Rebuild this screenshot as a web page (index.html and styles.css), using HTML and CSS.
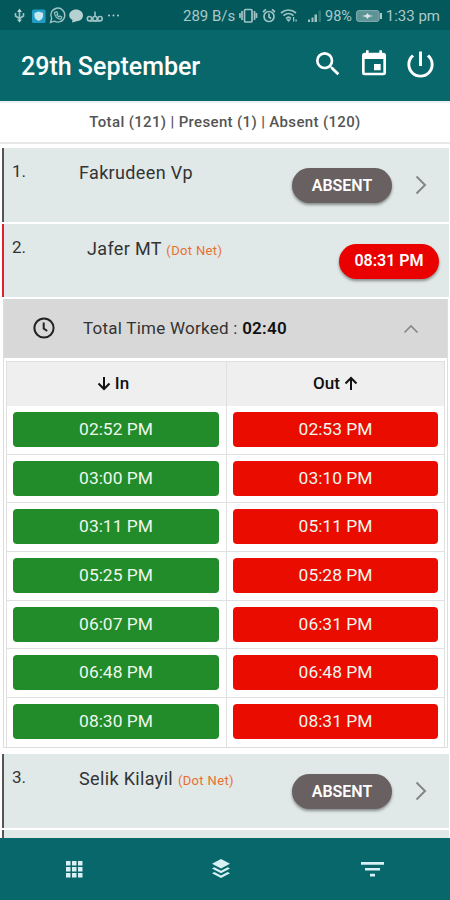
FILE: index.html
```
<!DOCTYPE html>
<html lang="en">
  <head>
    <meta charset="utf-8">
    <title>29th September</title>
    <link rel="stylesheet" href="styles.css">
  </head>
<body>
<div class="app">

  <div class="statusbar">
    <svg class="status-left" width="112" height="30" viewBox="0 0 112 30">
      <g fill="none" stroke="#9fc3c5" stroke-width="1.600">
        <path d="M9.500 21V10M5.500 13v3l4 2.500 4-2.500v-3"/>
        <path d="M40.500 22.500l1.200-4a7 7 0 1 1 2.700 2.700z" stroke-width="1.400"/>
        <path d="M44.500 12.500c0 4 3 6.700 6.300 6.700l1-2.200-2-1-1 1-2-2 1-1-1-2.300z" stroke-width="1.200"/>
        <path d="M79.500 21h10M85 11.500v5" />
        <circle cx="79.500" cy="18.700" r="2.200"/>
        <circle cx="85" cy="18.700" r="2.200"/>
        <circle cx="90" cy="18.700" r="2.200"/>
      </g>
      <g fill="#b6d1d2">
        <path d="M7 12l2.500-3.500L12 12zM7 19.500h5l-2.500 3z"/>
        <path d="M66 9.500c4 0 7 2.500 7 6s-3 5.700-6.500 5.700L62 22.500l.5-2.500c-2-1-3.300-2.600-3.300-4.700 0-3.300 3-5.800 6.800-5.800z"/>
        <circle cx="99" cy="15.500" r="1"/><circle cx="103.500" cy="15.500" r="1"/><circle cx="108" cy="15.500" r="1"/>
      </g>
      <rect x="22" y="9.500" width="13.500" height="13.500" rx="1.500" fill="#219dc5"/>
      <path d="M28.700 11.500l4.300 1.500v3c0 2.300-1.700 4-4.300 5-2.600-1-4.300-2.700-4.300-5v-3z" fill="#c5e8f1"/>
    </svg>
    <span class="speed">289 B/s</span>
    <svg class="status-mid" width="86" height="30" viewBox="238 0 86 30">
      <g fill="none" stroke="#9fc3c5" stroke-width="1.700">
        <rect x="244.500" y="9.500" width="7.500" height="12.500" rx="1"/>
        <path d="M242 11v9M240 13v5M254.500 11v9M256.500 13v5"/>
        <circle cx="269" cy="16.500" r="5"/>
        <path d="M269 13.500v3.500l2 1.500M263 12l3-2.700M275 12l-3-2.700"/>
        <path d="M281 13c4.500-4 10.500-4 15 0M283.500 15.700c3-2.700 7-2.700 10 0M286 18.500c1.500-1.500 3.500-1.500 5 0"/>
      </g>
      <g fill="#9fc3c5">
        <path d="M286 19.300h5l-2.500 2.700zM293 17h1.300v4.500H293zM295.500 19.500h1.300v2h-1.300z"/>
        <path d="M308 19.500h2V22h-2zM311.500 17.500h2V22h-2zM314.500 14.500h2.500V22h-2.500z"/>
      </g>
      <path d="M318.500 10.500h2.500V22h-2.500z" fill="#2d7679"/>
    </svg>
    <span class="percent">98%</span>
    <svg class="battery" width="26" height="12" viewBox="0 0 26 12">
      <rect x=".6" y=".6" width="22.500" height="10.800" rx="2" fill="#5e9395" stroke="#83afb1"/>
      <path d="M24 3h2v6h-2z" fill="#a9c9ca"/>
      <path d="M6 6l4-1 1.500-2 1.500 2 4 1-4 1-1.500 2L10 7z" fill="#d5e8e8"/>
    </svg>
    <span class="clock">1:33 pm</span>
  </div>

  <div class="header">
    <h1>29th September</h1>
    <svg class="icon-search" width="32" height="32" viewBox="0 0 24 24">
      <path fill="#fff" d="M15.500 14h-.79l-.28-.27A6.470 6.470 0 0 0 16 9.500 6.500 6.500 0 1 0 9.500 16c1.610 0 3.090-.59 4.230-1.570l.27.28v.79l5 4.990L20.490 19zm-6 0a4.500 4.500 0 1 1 0-9 4.500 4.500 0 0 1 0 9z"/>
    </svg>
    <svg class="icon-event" width="32" height="30" viewBox="0 0 24 24" preserveAspectRatio="none">
      <path fill="#fff" d="M17 12h-5v5h5zM16 1v2H8V1H6v2H5c-1.110 0-2 .9-2 2v14a2 2 0 0 0 2 2h14a2 2 0 0 0 2-2V5a2 2 0 0 0-2-2h-1V1zm3 18H5V8h14z"/>
    </svg>
    <svg class="icon-power" width="35" height="35" viewBox="0 0 24 24">
      <path fill="#fff" d="M13 3h-2v10h2zm4.830 2.170-1.420 1.420A6.920 6.920 0 0 1 19 12a7 7 0 1 1-11.420-5.420L6.170 5.170A8.930 8.930 0 0 0 3 12a9 9 0 0 0 18 0c0-2.740-1.230-5.180-3.170-6.830z"/>
    </svg>
  </div>

  <div class="summary">Total (121) | Present (1) | Absent (120)</div>

  <div class="list">
    <div class="person">
      <span class="no">1.</span>
      <span class="name">Fakrudeen Vp</span>
      <span class="pill">ABSENT</span>
      <svg class="chevron" width="12" height="20" viewBox="0 0 12 20"><path d="M1.500 1.500L10 10l-8.500 8.500"/></svg>
    </div>

    <div class="person present">
      <span class="no">2.</span>
      <span class="name">Jafer MT <small>(Dot Net)</small></span>
      <span class="pill pill-red">08:31 PM</span>
    </div>

    <div class="details">
      <div class="total">
        <svg class="icon-clock" width="22" height="22" viewBox="0 0 22 22"><circle cx="11" cy="11" r="9.600"/><path d="M10.700 5.500v6l3.500 2.500"/></svg>
        <span class="worked">Total Time Worked : <b>02:40</b></span>
        <svg class="collapse" width="16" height="10" viewBox="0 0 16 10"><path d="M1.500 8.500L8 2l6.500 6.500"/></svg>
      </div>
      <div class="times">
        <div class="head"><svg width="14" height="15" viewBox="0 0 14 15"><path d="M7 1v12M1.500 7.500L7 13l5.500-5.500"/></svg>In</div>
        <div class="head">Out<svg width="14" height="15" viewBox="0 0 14 15"><path d="M7 14V2M1.500 7.500L7 2l5.500 5.500"/></svg></div>
        <div class="cell"><span class="in">02:52 PM</span></div>
        <div class="cell"><span class="out">02:53 PM</span></div>
        <div class="cell"><span class="in">03:00 PM</span></div>
        <div class="cell"><span class="out">03:10 PM</span></div>
        <div class="cell"><span class="in">03:11 PM</span></div>
        <div class="cell"><span class="out">05:11 PM</span></div>
        <div class="cell"><span class="in">05:25 PM</span></div>
        <div class="cell"><span class="out">05:28 PM</span></div>
        <div class="cell"><span class="in">06:07 PM</span></div>
        <div class="cell"><span class="out">06:31 PM</span></div>
        <div class="cell"><span class="in">06:48 PM</span></div>
        <div class="cell"><span class="out">06:48 PM</span></div>
        <div class="cell"><span class="in">08:30 PM</span></div>
        <div class="cell"><span class="out">08:31 PM</span></div>
      </div>
    </div>

    <div class="person">
      <span class="no">3.</span>
      <span class="name">Selik Kilayil <small>(Dot Net)</small></span>
      <span class="pill">ABSENT</span>
      <svg class="chevron" width="12" height="20" viewBox="0 0 12 20"><path d="M1.500 1.500L10 10l-8.500 8.500"/></svg>
    </div>
    <div class="person"></div>
  </div>

  <div class="tabs">
    <div class="tab">
      <svg width="18" height="18" viewBox="0 0 18 18" fill="#d9f1f4">
        <path d="M1 1h4.500v4.500H1zM7 1h4.500v4.500H7zM13 1h4.500v4.500H13zM1 7h4.500v4.500H1zM7 7h4.500v4.500H7zM13 7h4.500v4.500H13zM1 13h4.500v4.500H1zM7 13h4.500v4.500H7zM13 13h4.500v4.500H13z"/>
      </svg>
    </div>
    <div class="tab">
      <svg width="20" height="22" viewBox="0 0 20 22" fill="#d9f1f4">
        <path d="M10 1l9 4.700-9 4.700-9-4.700z"/>
        <path d="M1 10.500l2.300-1.200L10 12.800l6.700-3.500 2.300 1.200-9 4.700z"/>
        <path d="M1 15.300l2.300-1.200 6.700 3.500 6.700-3.500 2.300 1.200-9 4.700z"/>
      </svg>
    </div>
    <div class="tab">
      <svg width="23" height="16" viewBox="0 0 23 16" fill="#d9f1f4">
        <path d="M0 1h23v2.700H0zM4 7h15v2.600H4zM9 12.800h5v2.600H9z"/>
      </svg>
    </div>
  </div>

</div>
</body>
</html>
```
FILE: styles.css
```
* {
  box-sizing: border-box;
}

body {
  margin: 0;
  font-family: Roboto, "Liberation Sans", sans-serif;
  color: #333;
  background: #fff;
}

svg {
  display: block;
  flex: none;
}

.app {
  display: flex;
  flex-direction: column;
  width: 450px;
  height: 900px;
  overflow: hidden;
}

/* phone status bar */
.statusbar {
  display: flex;
  align-items: center;
  flex: none;
  height: 30px;
  padding: 2px 10px 0 10px;
  background: #03585b;
  color: #a9c9ca;
  font-size: 15px;
  white-space: nowrap;
}

.statusbar svg {
  margin-top: -2px;
}

.speed {
  width: 53px;
  margin-left: 61px;
}

.status-mid {
  margin-left: 2px;
}

.percent {
  width: 29px;
  margin-left: 1px;
  font-size: 14.5px;
}

.statusbar .battery {
  margin: 0 0 0 2px;
}

.clock {
  margin-left: auto;
}

.header {
  display: flex;
  align-items: center;
  flex: none;
  height: 71px;
  padding: 0 12px 3px 21px;
  background: #07676b;
}

.header h1 {
  flex: 1;
  margin: 0;
  padding-top: 4px;
  color: #fff;
  font-size: 25px;
  font-weight: 500;
}

.icon-search {
  margin-right: 14px;
}

.icon-event {
  margin-right: 13px;
}

.summary {
  flex: none;
  height: 43px;
  border-bottom: 2px solid #e6e7e7;
  border-top: 2px solid #eceeef;
  color: #555;
  font-size: 15px;
  font-weight: 500;
  letter-spacing: .35px;
  line-height: 38px;
  text-align: center;
}

.list {
  flex: 1;
  padding: 4px 1px 0 2px;
  overflow: hidden;
}

.person {
  display: flex;
  align-items: flex-start;
  height: 74px;
  margin-bottom: 2px;
  padding: 0 22px 0 8px;
  background: #e0e8e8;
  border-left: 2px solid #555;
}

.present {
  height: 73px;
  padding-right: 10px;
  border-left-color: #e0202a;
}

.no {
  width: 67px;
  padding-top: 13px;
  font-size: 17px;
}

.name {
  flex: 1;
  padding-top: 14px;
  font-size: 18px;
  letter-spacing: .35px;
  line-height: 22px;
}

.present .name {
  padding-left: 8px;
}

.name small {
  color: #e8702f;
  font-size: 13px;
}

.pill {
  width: 100px;
  height: 35px;
  margin-top: 20px;
  border-radius: 18px;
  background: #686061;
  box-shadow: 0 2px 3px rgba(0, 0, 0, .4);
  color: #fff;
  font-size: 16px;
  font-weight: 600;
  line-height: 35px;
  text-align: center;
}

.pill-red {
  background: #eb0000;
  line-height: 33px;
}

.chevron {
  margin: 27px 0 0 23px;
  fill: none;
  stroke: #838787;
  stroke-width: 2;
}

/* expanded times of a person */
.details {
  margin: 0 1px 6px;
  border: 1px solid #ddd;
  border-top: 0;
}

.total {
  display: flex;
  align-items: center;
  height: 59px;
  padding: 0 28px 2px 29px;
  background: #d8d8d8;
}

.icon-clock {
  fill: none;
  stroke: #222;
  stroke-width: 2;
}

.worked {
  flex: 1;
  padding-left: 28px;
  font-size: 17px;
  letter-spacing: .25px;
}

.worked b {
  color: #111;
  font-weight: 600;
}

.collapse {
  margin-top: 2px;
  fill: none;
  stroke: #888;
  stroke-width: 1.7;
}

.times {
  display: grid;
  grid-template-columns: 220px 1fr;
  grid-template-rows: 44px repeat(7, 48.7px);
  margin: 3px 2px 0;
  border: 1px solid #e0e0e0;
  border-bottom: 0;
}

.head {
  display: flex;
  align-items: center;
  justify-content: center;
  gap: 4px;
  padding-bottom: 2px;
  background: #efefef;
  color: #111;
  font-size: 17px;
  font-weight: 500;
}

.head svg {
  fill: none;
  stroke: #111;
  stroke-width: 2;
}

.cell {
  padding: 6px;
  border-bottom: 1px solid #e0e0e0;
}

.head:nth-child(odd),
.cell:nth-child(odd) {
  padding-right: 7px;
  border-right: 1px solid #e0e0e0;
}

.cell:nth-last-child(-n+2) {
  border-bottom: 0;
}

.in,
.out {
  display: block;
  height: 35px;
  border-radius: 4px;
  background: #218c29;
  color: #eef8ee;
  font-size: 17.4px;
  line-height: 34px;
  text-align: center;
}

.out {
  background: #eb0c00;
}

.tabs {
  display: flex;
  flex: none;
  height: 62px;
  padding-right: 4px;
  background: #07676b;
}

.tab {
  display: flex;
  flex: 1;
  align-items: center;
  justify-content: center;
}

/* funnel icon sits slightly off centre */
.tab:last-child {
  padding-left: 5px;
}
```
